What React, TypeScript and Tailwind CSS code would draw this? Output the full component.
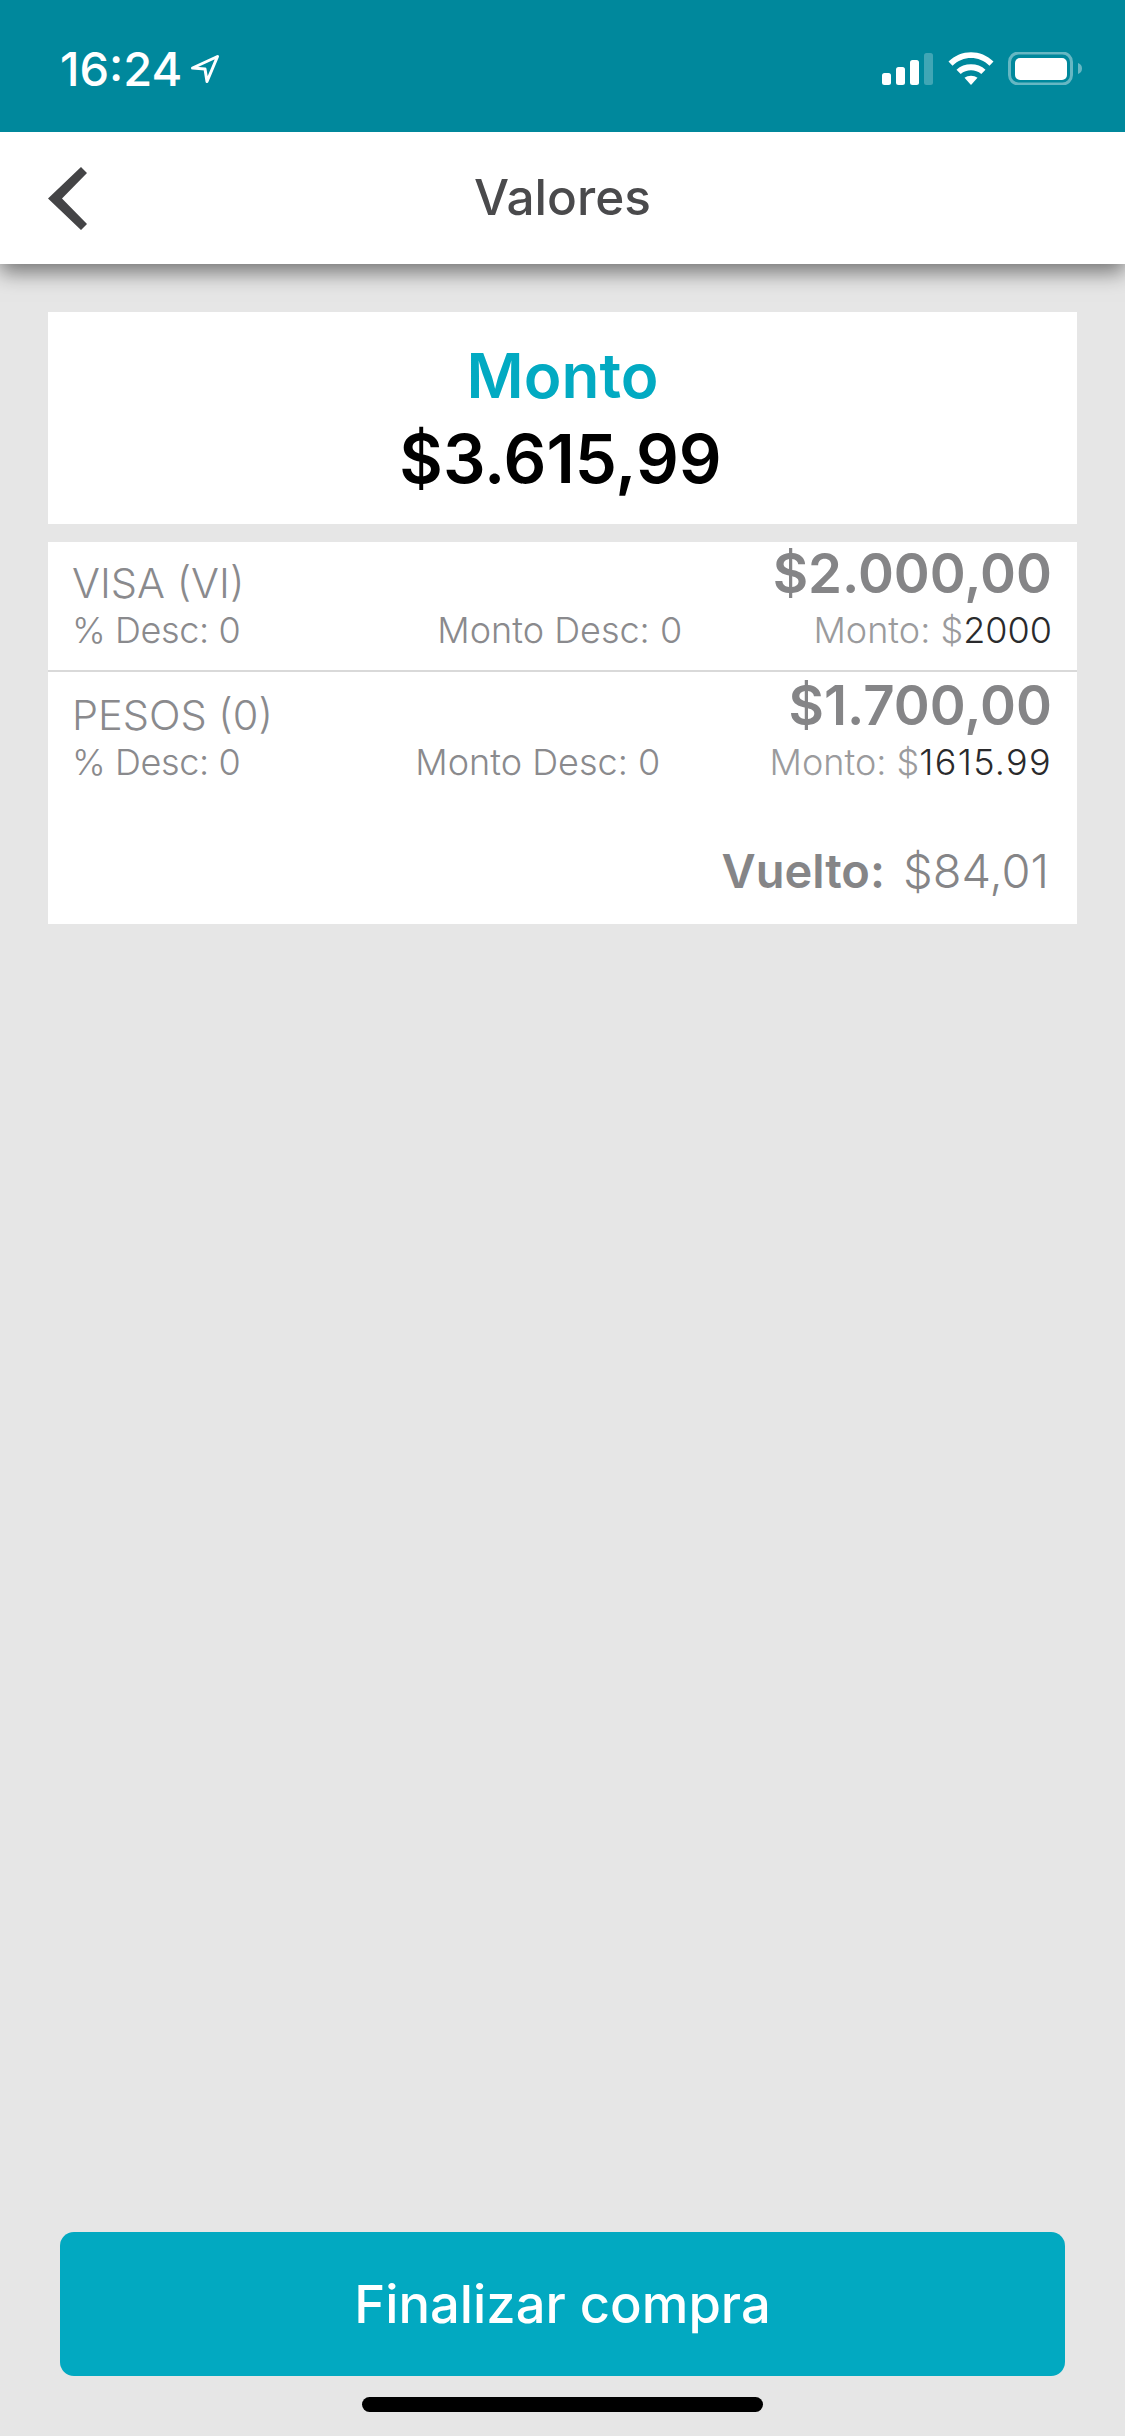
function SignalWifiBattery() {
  return (
    <svg width="200" height="33" viewBox="882 52 200 33" fill="#fff">
      <rect x="882" y="73" width="9" height="12" rx="2.5" />
      <rect x="896" y="67" width="9" height="18" rx="2.5" />
      <rect x="910" y="60" width="9" height="25" rx="2.5" />
      <rect x="924" y="53" width="9" height="32" rx="2.5" opacity="0.25" />
      <path d="M948.5 61.5 C961 49 981 49 993.5 61.5 L989.5 65.8 C979 55.5 963 55.5 952.5 65.8 Z" />
      <path d="M956.5 69.8 C964 62.5 978 62.5 985.5 69.8 L981.3 74 C975.5 69 966.5 69 960.7 74 Z" />
      <path d="M964.5 77.8 C968 75 974 75 977.5 77.8 L971 85 Z" />
      <rect x="1009.5" y="53" width="62" height="31" rx="9" fill="none" stroke="#fff" strokeOpacity="0.4" strokeWidth="3" />
      <rect x="1015" y="58" width="52" height="22" rx="5" />
      <path d="M1078 63 C1081 64 1082 66 1082 68.500 C1082 71 1081 73 1078 74 Z" opacity="0.4" />
    </svg>
  );
}

function LocationArrow() {
  return (
    <svg width="30" height="30" viewBox="0 0 30 30" fill="none" stroke="#fff" strokeWidth="3" strokeLinejoin="round">
      <path d="M2.500 14 L27.500 2.500 L17 27.500 L15 15 Z" />
    </svg>
  );
}

function BackChevron() {
  return (
    <svg width="39" height="63" viewBox="48 166 39 63" fill="#444446">
      <polygon points="81,166 87,172 62,197.500 87,223 81,229 48,197.500" />
    </svg>
  );
}

interface RowProps {
  name: string;
  total: string;
  amount: string;
  amountClass?: string;
}

function PaymentRow({ name, total, amount, amountClass }: RowProps) {
  return (
    <div className="pl-[24px] pr-[25px]">
      <div className="flex justify-between items-start h-[68px]">
        <span className="text-[41.5px] leading-[40px] mt-[21px] text-[#8a8a8d] font-light">{name}</span>
        <span className="text-[54.5px] leading-[58px] mt-[2px] font-semibold text-[#858587]">{total}</span>
      </div>
      <div className="flex items-center text-[36px] leading-[40px] text-[#8a8a8d] font-light">
        <span className="w-[234px] tracking-[-0.4px]">% Desc: 0</span>
        <span className="flex-1 text-center">Monto Desc: 0</span>
        <span>
          <span className="text-[#9b9b9d]">Monto: $</span>
          <span className={amountClass ?? "text-[#2a2a2c]"}>{amount}</span>
        </span>
      </div>
    </div>
  );
}

export default function App() {
  return (
    <div className="w-[1125px] h-[2436px] flex flex-col bg-[#e6e6e6] font-['Inter',sans-serif]">
      <div className="relative z-20 h-[132px] bg-[#00889c] flex justify-between items-start pl-[60px] pr-[43px] pt-[52px] shrink-0">
        <div className="flex items-center gap-[8px] text-white">
          <span className="text-[47px] leading-[34px] font-medium">16:24</span>
          <LocationArrow />
        </div>
        <SignalWifiBattery />
      </div>

      <div className="h-[132px] bg-white flex items-center px-[48px] shrink-0 shadow-[0_8px_20px_rgba(0,0,0,0.5)] z-10">
        <div className="w-[39px] flex"><BackChevron /></div>
        <h1 className="flex-1 text-center text-[49.5px] font-medium text-[#4a4a4c] leading-none">Valores</h1>
        <div className="w-[39px]" />
      </div>

      <div className="flex-1 flex flex-col px-[48px] pt-[48px]">
        <div className="h-[212px] bg-white flex flex-col items-center pt-[28px]">
          <span className="text-[62px] leading-[72px] font-semibold text-[#02aac2]">Monto</span>
          <span className="text-[67px] leading-[76px] mt-[9px] mr-[4px] font-semibold text-black">$3.615,99</span>
        </div>

        <div className="h-[382px] mt-[18px] bg-white flex flex-col">
          <PaymentRow name="VISA (VI)" total="$2.000,00" amount="2000" />
          <div className="h-[2px] mt-[20px] bg-[#d9d9d9]" />
          <div className="pt-[2px]">
            <PaymentRow
              name="PESOS (0)"
              total="$1.700,00"
              amount="1615.99"
              amountClass="text-[#2a2a2c] tracking-[1.3px]"
            />
          </div>
          <div className="flex justify-end gap-[18px] pr-[28px] mt-[64px] text-[47px] leading-[50px] text-[#858587]">
            <span className="font-semibold">Vuelto:</span>
            <span className="font-light">$84,01</span>
          </div>
        </div>
      </div>

      <div className="px-[60px] shrink-0">
        <button className="w-full h-[144px] rounded-[14px] bg-[#02a9c1] text-white text-[52.5px] font-medium">
          Finalizar compra
        </button>
      </div>
      <div className="h-[60px] flex justify-center pt-[21px] shrink-0">
        <div className="w-[401px] h-[15px] rounded-full bg-black" />
      </div>
    </div>
  );
}
